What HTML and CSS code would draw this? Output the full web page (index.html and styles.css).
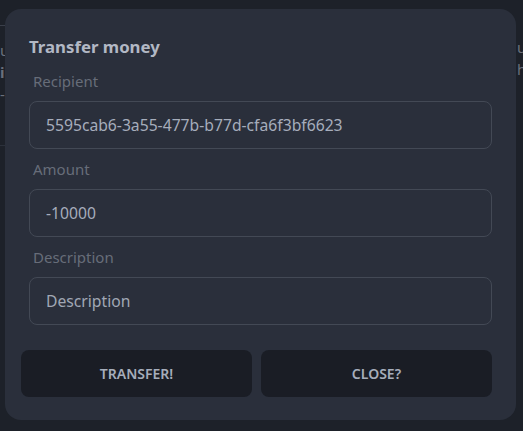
FILE: index.html
```html
<!DOCTYPE html>
<html lang="en">
<head>
<meta charset="utf-8">
<title>Transfer money</title>
<link rel="stylesheet" href="styles.css">
</head>
<body>
<div class="page">
  <div class="bg-col bg-left">
    <div class="bg-rule"></div>
    <div class="bg-line">u</div>
    <div class="bg-line bold">il</div>
    <div class="bg-line">-F</div>
    <div class="bg-rule bg-rule-low"></div>
  </div>
  <div class="bg-col bg-right">
    <div class="bg-line">u</div>
    <div class="bg-line">h</div>
  </div>
</div>
<div class="modal">
  <h3 class="modal-title">Transfer money</h3>
  <div class="field">
    <label class="field-label" for="recipient">Recipient</label>
    <input class="field-input" id="recipient" type="text" value="5595cab6-3a55-477b-b77d-cfa6f3bf6623">
  </div>
  <div class="field">
    <label class="field-label" for="amount">Amount</label>
    <input class="field-input" id="amount" type="text" value="-10000">
  </div>
  <div class="field">
    <label class="field-label" for="desc">Description</label>
    <input class="field-input" id="desc" type="text" placeholder="Description">
  </div>
  <div class="actions">
    <button class="btn" type="button">Transfer!</button>
    <button class="btn" type="button">Close?</button>
  </div>
</div>
</body>
</html>
```

FILE: styles.css
```css
* { box-sizing: border-box; }
html, body { margin: 0; padding: 0; }
body {
  width: 523px;
  height: 431px;
  overflow: hidden;
  background: #1d2129;
  font-family: "Noto Sans", "Open Sans", sans-serif;
  color: #a6adbb;
}
.page {
  display: flex;
  justify-content: space-between;
  height: 431px;
}
.bg-col {
  display: flex;
  flex-direction: column;
}
.bg-left { width: 12px; padding-top: 25px; }
.bg-right { width: 6px; padding-top: 36px; }
.bg-rule { height: 1px; background: #3a3f4a; width: 100%; flex: none; }
.bg-rule-low { margin-top: 40px; background: #2c313b; }
.bg-line {
  font-size: 15px;
  line-height: 22px;
  color: #6a707c;
  white-space: nowrap;
}
.bg-left .bg-line:nth-child(2) { margin-top: 13px; }
.bg-line.bold { font-weight: 700; }

.modal {
  position: fixed;
  left: 5px;
  top: 9px;
  width: 511px;
  height: 411px;
  border-radius: 16px;
  background: #2a2f3b;
  padding: 24px;
  display: flex;
  flex-direction: column;
}
.modal-title {
  margin: 0;
  font-size: 16.8px;
  line-height: 28px;
  font-weight: 700;
  color: #b2b8c4;
}
.field {
  display: flex;
  flex-direction: column;
}
.field-label {
  height: 40px;
  padding: 8px 4px;
  font-size: 15px;
  line-height: 24px;
  color: #676d79;
}
.field-input {
  height: 48px;
  width: 100%;
  border: 1px solid #434955;
  border-radius: 8px;
  background: transparent;
  padding: 0 16px;
  font-family: inherit;
  font-size: 15.7px;
  color: #a6adbb;
  outline: none;
}
.field-input::placeholder { color: #a0a7b4; opacity: 1; }
.actions {
  margin-top: 25px;
  margin-left: -8px;
  display: grid;
  grid-template-columns: 1fr 1fr;
  gap: 9px;
}
.btn {
  height: 47px;
  border: none;
  border-radius: 8px;
  background: #1a1d25;
  color: #a6adbb;
  font-family: inherit;
  font-size: 14px;
  font-weight: 600;
  text-transform: uppercase;
  cursor: pointer;
}
```
